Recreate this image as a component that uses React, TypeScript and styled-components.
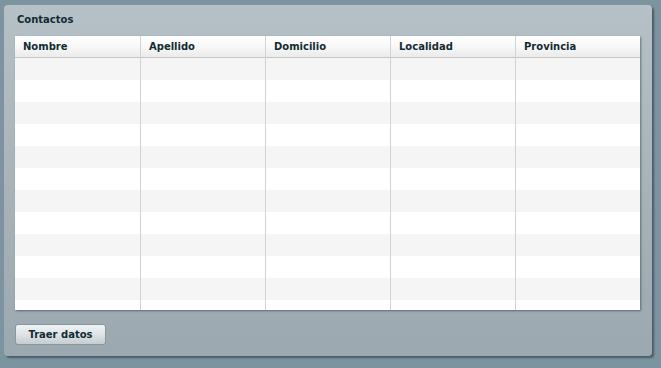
import React from 'react';
import styled, { createGlobalStyle } from 'styled-components';

const GlobalStyle = createGlobalStyle`
  html, body {
    margin: 0;
    padding: 0;
    background: #7c949f;
    font-family: 'DejaVu Sans', Verdana, sans-serif;
  }
`;

const Page = styled.div`
  width: 661px;
  height: 368px;
  padding: 5px 0 0 4px;
  box-sizing: border-box;
`;

const Panel = styled.div`
  width: 648px;
  height: 351px;
  box-sizing: border-box;
  padding: 0 11px 10px 11px;
  border-radius: 4px;
  background: linear-gradient(to bottom, #b5c1c7 0%, #a8b4ba 50%, #9ca8af 100%);
  box-shadow: 2px 2px 2px rgba(30, 45, 55, 0.55);
  display: flex;
  flex-direction: column;
`;

const Title = styled.div`
  height: 31px;
  line-height: 30px;
  padding-left: 2px;
  font-size: 10px;
  font-weight: bold;
  color: #132a33;
`;

const Table = styled.div`
  width: 625px;
  height: 274px;
  overflow: hidden;
  background: #fff;
  box-shadow: 1px 1px 2px rgba(40, 55, 65, 0.55);
`;

const Row = styled.div<{ $alt?: boolean }>`
  display: grid;
  grid-template-columns: repeat(5, 125px);
  height: 22px;
  background: ${({ $alt }) => ($alt ? '#f5f5f5' : '#ffffff')};
`;

const HeaderRow = styled(Row)`
  height: 21px;
  background: linear-gradient(to bottom, #ffffff 0%, #f8f8f8 50%, #ebebeb 100%);
  border-bottom: 1px solid #c6c6c6;
`;

const Cell = styled.div`
  box-sizing: border-box;
  border-left: 1px solid #d2d2d2;
  &:first-child {
    border-left: none;
  }
`;

const HeadCell = styled(Cell)`
  padding-left: 8px;
  line-height: 22px;
  font-size: 10px;
  font-weight: bold;
  color: #132a33;
`;

const Footer = styled.div`
  margin-top: 14px;
  display: flex;
`;

const Button = styled.button`
  width: 91px;
  height: 21px;
  padding: 0;
  border: 1px solid #8a979d;
  border-radius: 3px;
  background: linear-gradient(to bottom, #f0f3f4 0%, #dde3e6 50%, #c5cdd1 100%);
  font-family: 'DejaVu Sans', Verdana, sans-serif;
  font-size: 10px;
  font-weight: bold;
  color: #112a33;
  cursor: pointer;
`;

const columns = ['Nombre', 'Apellido', 'Domicilio', 'Localidad', 'Provincia'];
const rows = Array.from({ length: 12 }, (_, i) => i);

export default function App() {
  return (
    <Page>
      <GlobalStyle />
      <Panel>
        <Title>Contactos</Title>
        <Table>
          <HeaderRow>
            {columns.map((c) => (
              <HeadCell key={c}>{c}</HeadCell>
            ))}
          </HeaderRow>
          {rows.map((r) => (
            <Row key={r} $alt={r % 2 === 0}>
              {columns.map((c) => (
                <Cell key={c} />
              ))}
            </Row>
          ))}
        </Table>
        <Footer>
          <Button>Traer datos</Button>
        </Footer>
      </Panel>
    </Page>
  );
}
